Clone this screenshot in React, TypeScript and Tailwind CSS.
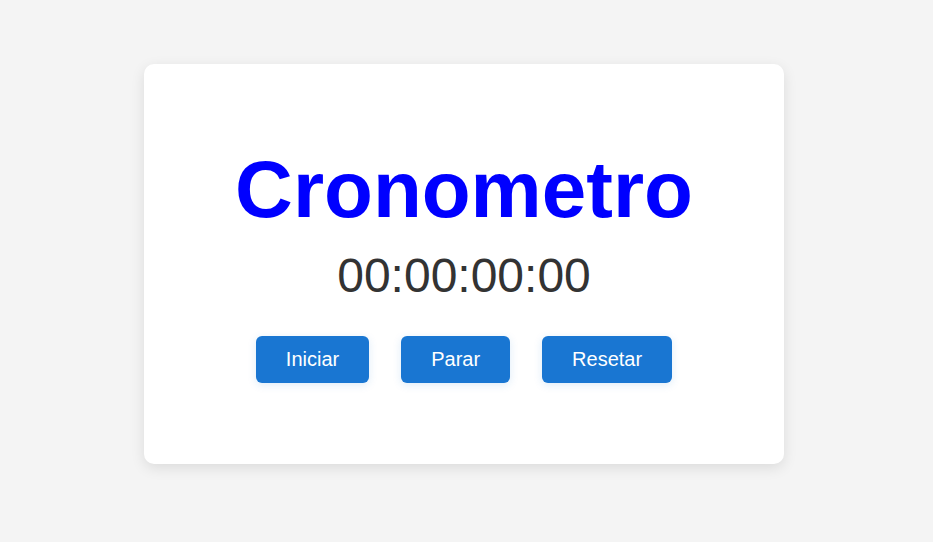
import React, { useState, useEffect } from 'react';

const pad = (n: number) => String(n).padStart(2, '0');

const App: React.FC = () => {
  const [ms, setMs] = useState(0);
  const [running, setRunning] = useState(false);

  useEffect(() => {
    if (!running) return;
    const id = setInterval(() => setMs(v => v + 10), 10);
    return () => clearInterval(id);
  }, [running]);

  const h = Math.floor(ms / 3600000);
  const m = Math.floor(ms / 60000) % 60;
  const s = Math.floor(ms / 1000) % 60;
  const cs = Math.floor(ms / 10) % 100;

  const buttons = [
    { label: 'Iniciar', onClick: () => setRunning(true) },
    { label: 'Parar', onClick: () => setRunning(false) },
    { label: 'Resetar', onClick: () => { setRunning(false); setMs(0); } },
  ];

  return (
    <div className="min-h-[542px] w-full bg-[#f4f4f4] font-['Liberation_Sans',Arial,sans-serif]">
      <div className="w-[928px] flex justify-center pt-[64px]">
        <div className="w-[640px] h-[400px] bg-white rounded-[10px] shadow-[0_4px_14px_rgba(0,0,0,0.1)] flex flex-col items-center pt-[86px]">
          <h1 className="text-[80px] leading-[80px] font-bold text-[#0000ff]">Cronometro</h1>
          <div className="mt-[22px] text-[48px] leading-[48px] text-[#333333]">
            {pad(h)}:{pad(m)}:{pad(s)}:{pad(cs)}
          </div>
          <div className="mt-[36px] flex gap-[32px]">
            {buttons.map(b => (
              <button
                key={b.label}
                onClick={b.onClick}
                className="px-[30px] py-[12px] text-[20px] leading-[23px] text-white bg-[#1976d2] rounded-[6px] shadow-[0_2px_8px_rgba(25,118,210,0.15)]"
              >
                {b.label}
              </button>
            ))}
          </div>
        </div>
      </div>
    </div>
  );
};

export default App;
